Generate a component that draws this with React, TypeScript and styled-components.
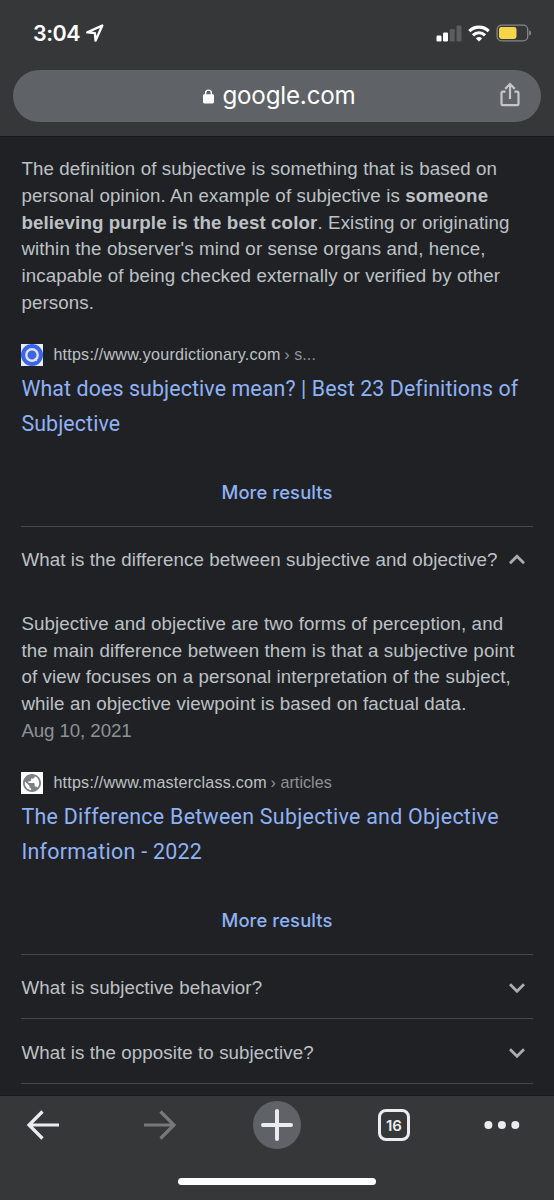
import React from "react";
import styled, { createGlobalStyle } from "styled-components";

const GlobalStyle = createGlobalStyle`
  * { box-sizing: border-box; }
  body { margin: 0; background: #202124; }
`;

const sans = `"Liberation Sans", Arial, sans-serif`;
const ui = `Inter, "Liberation Sans", sans-serif`;

const Screen = styled.div`
  width: 554px;
  height: 1200px;
  display: flex;
  flex-direction: column;
  overflow: hidden;
  background: #202124;
  color: #bdc1c6;
  font-family: ${sans};
`;

const Header = styled.header`
  flex: none;
  height: 137px;
  background: #363739;
  border-bottom: 1px solid #161719;
`;

const StatusBar = styled.div`
  height: 70px;
  padding: 0 22px 4px 33px;
  display: flex;
  align-items: center;
  justify-content: space-between;
`;

const Clock = styled.div`
  display: flex;
  align-items: center;
  gap: 6px;
  color: #fff;
  font: 600 21.5px/26px ${ui};
  letter-spacing: -0.5px;
`;

const StatusIcons = styled.div`
  display: flex;
  align-items: center;
  gap: 6px;
`;

const AddressBar = styled.div`
  margin: 0 13.4px;
  height: 52px;
  padding: 0 21px;
  border-radius: 26px;
  background: #5f6267;
  display: grid;
  grid-template-columns: 20px 1fr 20px;
  align-items: center;
`;

const Domain = styled.div`
  display: flex;
  align-items: center;
  justify-content: center;
  gap: 8px;
  padding-left: 5px;
  color: #fff;
  font: 400 24.2px/50px ${ui};
  letter-spacing: -0.2px;
`;

const ShareIcon = styled.svg`
  width: 20px;
  height: 25px;
  margin-bottom: 3px;
`;

const Content = styled.main`
  flex: 1;
  min-height: 0;
  padding: 19px 21.4px 0;
  overflow: hidden;
`;

const Answer = styled.p<{ $top?: number }>`
  margin: 0;
  padding-top: ${(p) => p.$top ?? 0}px;
  font-size: 18.73px;
  line-height: 26.8px;
  letter-spacing: 0.11px;
  white-space: nowrap;
`;

const Muted = styled.span`
  color: #8e9297;
`;

const PublishDate = styled(Muted)`
  letter-spacing: -0.1px;
`;

const Source = styled.div`
  margin-top: 27px;
  height: 22px;
  display: flex;
  align-items: center;
  gap: 10px;
  font-size: 16.1px;
  line-height: 20px;
  letter-spacing: 0.22px;
  white-space: nowrap;
`;

const Address = styled.span`
  padding-bottom: 2px;
`;

const Crumb = styled(Muted)`
  margin-left: -1px;
  letter-spacing: 0.05px;
`;

const Favicon = styled.svg`
  flex: none;
  width: 22px;
  height: 22px;
`;

const ResultTitle = styled.h3<{ $spacing: number }>`
  margin: 5px 0 0;
  color: #8fb2f5;
  font-family: Roboto, sans-serif;
  font-size: 21.4px;
  font-weight: 400;
  line-height: 35px;
  letter-spacing: ${(p) => p.$spacing}px;
  white-space: nowrap;
`;

const MoreResults = styled.div`
  margin-top: 29.5px;
  height: 55.5px;
  padding-top: 5px;
  text-align: center;
  color: #8fb2f5;
  font: 500 18.4px/35px ${ui};
  letter-spacing: 0.1px;
`;

const Question = styled.div`
  height: 64.5px;
  padding: 3px 7px 0 0;
  border-top: 1px solid #45474b;
  display: flex;
  align-items: center;
  justify-content: space-between;
  font-size: 18.73px;
  letter-spacing: 0.09px;
  white-space: nowrap;
`;

const Footer = styled.footer`
  flex: none;
  height: 105px;
  border-top: 1px solid #191a1c;
  background: #363739;
`;

const Toolbar = styled.nav`
  height: 58px;
  padding-left: 26px;
  display: grid;
  grid-template-columns: 117px 110px 125px 106px 36px;
  align-items: center;
`;

const AddButton = styled.div`
  width: 48px;
  height: 48px;
  border-radius: 50%;
  background: #5f6267;
  display: grid;
  place-items: center;
`;

const TabCount = styled.div`
  width: 32px;
  height: 32px;
  border: 3px solid #ececf0;
  border-radius: 8px;
  color: #ececf0;
  text-align: center;
  font: 600 15px/27px ${ui};
`;

const HomeIndicator = styled.div`
  width: 198px;
  height: 7px;
  margin: 24px auto 0;
  border-radius: 4px;
  background: #fff;
`;

const Chevron = ({ up = false }: { up?: boolean }) => (
  <svg width="18" height="18" viewBox="0 0 18 18" fill="none" stroke="#a9acb1" strokeWidth="2.8">
    <path d={up ? "M2 12.3 9 5.3l7 7" : "M2 5.3l7 7 7-7"} />
  </svg>
);

const Arrow = ({ forward = false }: { forward?: boolean }) => (
  <svg width="34" height="30" viewBox="0 0 34 30" fill="none" stroke={forward ? "#77787a" : "#ececf0"} strokeWidth="3.2">
    <path d={forward ? "M1 15h30M17.5 1.5 31 15 17.5 28.5" : "M33 15H3M16.5 1.5 3 15l13.5 13.5"} />
  </svg>
);

export default function App() {
  return (
    <Screen>
      <GlobalStyle />
      <Header>
        <StatusBar>
          <Clock>
            3:04
            <svg width="18" height="18" viewBox="0 0 18 18" fill="none" stroke="#fff" strokeWidth="2.3" strokeLinejoin="round">
              <path d="M16.3 1.5 1.3 8.4l7.6.8.6 7.5Z" />
            </svg>
          </Clock>
          <StatusIcons>
            <svg width="26" height="17" viewBox="0 0 26 17">
              <rect x="0.5" y="10.5" width="5" height="6" rx="1.2" fill="#fff" />
              <rect x="7" y="7.5" width="5" height="9" rx="1.2" fill="#fff" />
              <rect x="13.7" y="4" width="5" height="12.5" rx="1.2" fill="#5c5d5f" />
              <rect x="20.5" y="0.5" width="5" height="16" rx="1.2" fill="#5c5d5f" />
            </svg>
            <svg width="22" height="17" viewBox="0 0 22 17" fill="none" stroke="#fff" strokeWidth="3.1">
              <path d="M1.3 6.2a13.7 13.7 0 0 1 19.4 0M5 10.3a8.5 8.5 0 0 1 12 0" />
              <path d="M11 16.5 7.9 13.4a4.4 4.4 0 0 1 6.2 0Z" fill="#fff" stroke="none" />
            </svg>
            <svg width="36" height="18" viewBox="0 0 36 18">
              <rect x="1.1" y="1.1" width="30.6" height="15.8" rx="4.4" fill="none" stroke="#858688" strokeWidth="1.3" />
              <rect x="3" y="3" width="17.5" height="12" rx="2.4" fill="#f7d54a" />
              <path d="M33.2 6.2q2 .8 2 2.8t-2 2.8Z" fill="#858688" />
            </svg>
          </StatusIcons>
        </StatusBar>
        <AddressBar>
          <span />
          <Domain>
            <svg width="11" height="15" viewBox="0 0 11 15">
              <rect y="5.3" width="11" height="9.2" rx="1.4" fill="#fff" />
              <path d="M2.6 7V4a2.9 2.9 0 0 1 5.8 0v3" fill="none" stroke="#fff" strokeWidth="1.4" />
            </svg>
            google.com
          </Domain>
          <ShareIcon viewBox="0 0 20 25" fill="none" stroke="#c3c5c9" strokeWidth="2.2">
            <path d="M5.6 9.6H2.8Q1.5 9.6 1.5 10.9V21.9q0 1.3 1.3 1.3H17.2q1.3 0 1.3-1.3V10.9q0-1.3-1.3-1.3H14.4M10 17V2.2M5.2 6.9 10 2.1l4.8 4.8" />
          </ShareIcon>
        </AddressBar>
      </Header>

      <Content>
        <Answer>
          The definition of subjective is something that is based on<br />
          personal opinion. An example of subjective is <b>someone</b><br />
          <b>believing purple is the best color</b>. Existing or originating<br />
          within the observer's mind or sense organs and, hence,<br />
          incapable of being checked externally or verified by other<br />
          persons.
        </Answer>
        <Source>
          <Favicon viewBox="0 0 22 22">
            <rect width="22" height="22" fill="#e8edff" />
            <circle cx="11" cy="11" r="11" fill="#3d63e6" />
            <circle cx="11" cy="11" r="5.7" fill="none" stroke="#dce5ff" strokeWidth="2.4" />
            <path d="m13.7 14.5 2.2 2.2" stroke="#dce5ff" strokeWidth="1.8" />
          </Favicon>
          <Address>https://www.yourdictionary.com <Crumb>› s...</Crumb></Address>
        </Source>
        <ResultTitle $spacing={0.09}>
          What does subjective mean? | Best 23 Definitions of<br />
          Subjective
        </ResultTitle>
        <MoreResults>More results</MoreResults>

        <Question>
          What is the difference between subjective and objective?
          <Chevron up />
        </Question>
        <Answer $top={20.5}>
          Subjective and objective are two forms of perception, and<br />
          the main difference between them is that a subjective point<br />
          of view focuses on a personal interpretation of the subject,<br />
          while an objective viewpoint is based on factual data.<br />
          <PublishDate>Aug 10, 2021</PublishDate>
        </Answer>
        <Source>
          <Favicon viewBox="0 0 22 22">
            <rect width="22" height="22" fill="#fff" />
            <g transform="translate(0.2 0.2) scale(0.9)">
              <path
                fill="#7c8084"
                d="M12 2C6.48 2 2 6.48 2 12s4.48 10 10 10 10-4.48 10-10S17.52 2 12 2zm-1 17.93c-3.95-.49-7-3.85-7-7.93 0-.62.08-1.21.21-1.79L9 15v1c0 1.1.9 2 2 2v1.93zm6.9-2.54c-.26-.81-1-1.39-1.9-1.39h-1v-3c0-.55-.45-1-1-1H8v-2h2c.55 0 1-.45 1-1V7h2c1.1 0 2-.9 2-2v-.41c2.93 1.19 5 4.06 5 7.41 0 2.08-.8 3.97-2.1 5.39z"
              />
            </g>
          </Favicon>
          <Address>https://www.masterclass.com <Crumb>› articles</Crumb></Address>
        </Source>
        <ResultTitle $spacing={0.28}>
          The Difference Between Subjective and Objective<br />
          Information - 2022
        </ResultTitle>
        <MoreResults>More results</MoreResults>

        <Question>
          What is subjective behavior?
          <Chevron />
        </Question>
        <Question>
          What is the opposite to subjective?
          <Chevron />
        </Question>
        <Question />
      </Content>

      <Footer>
        <Toolbar>
          <Arrow />
          <Arrow forward />
          <AddButton>
            <svg width="32" height="32" viewBox="0 0 32 32" stroke="#ececf0" strokeWidth="4" strokeLinecap="round">
              <path d="M2 16h28M16 2v28" />
            </svg>
          </AddButton>
          <TabCount>16</TabCount>
          <svg width="36" height="8" viewBox="0 0 36 8" fill="#ececf0">
            <circle cx="4.4" cy="4" r="4" />
            <circle cx="17.9" cy="4" r="4" />
            <circle cx="31.3" cy="4" r="4" />
          </svg>
        </Toolbar>
        <HomeIndicator />
      </Footer>
    </Screen>
  );
}
